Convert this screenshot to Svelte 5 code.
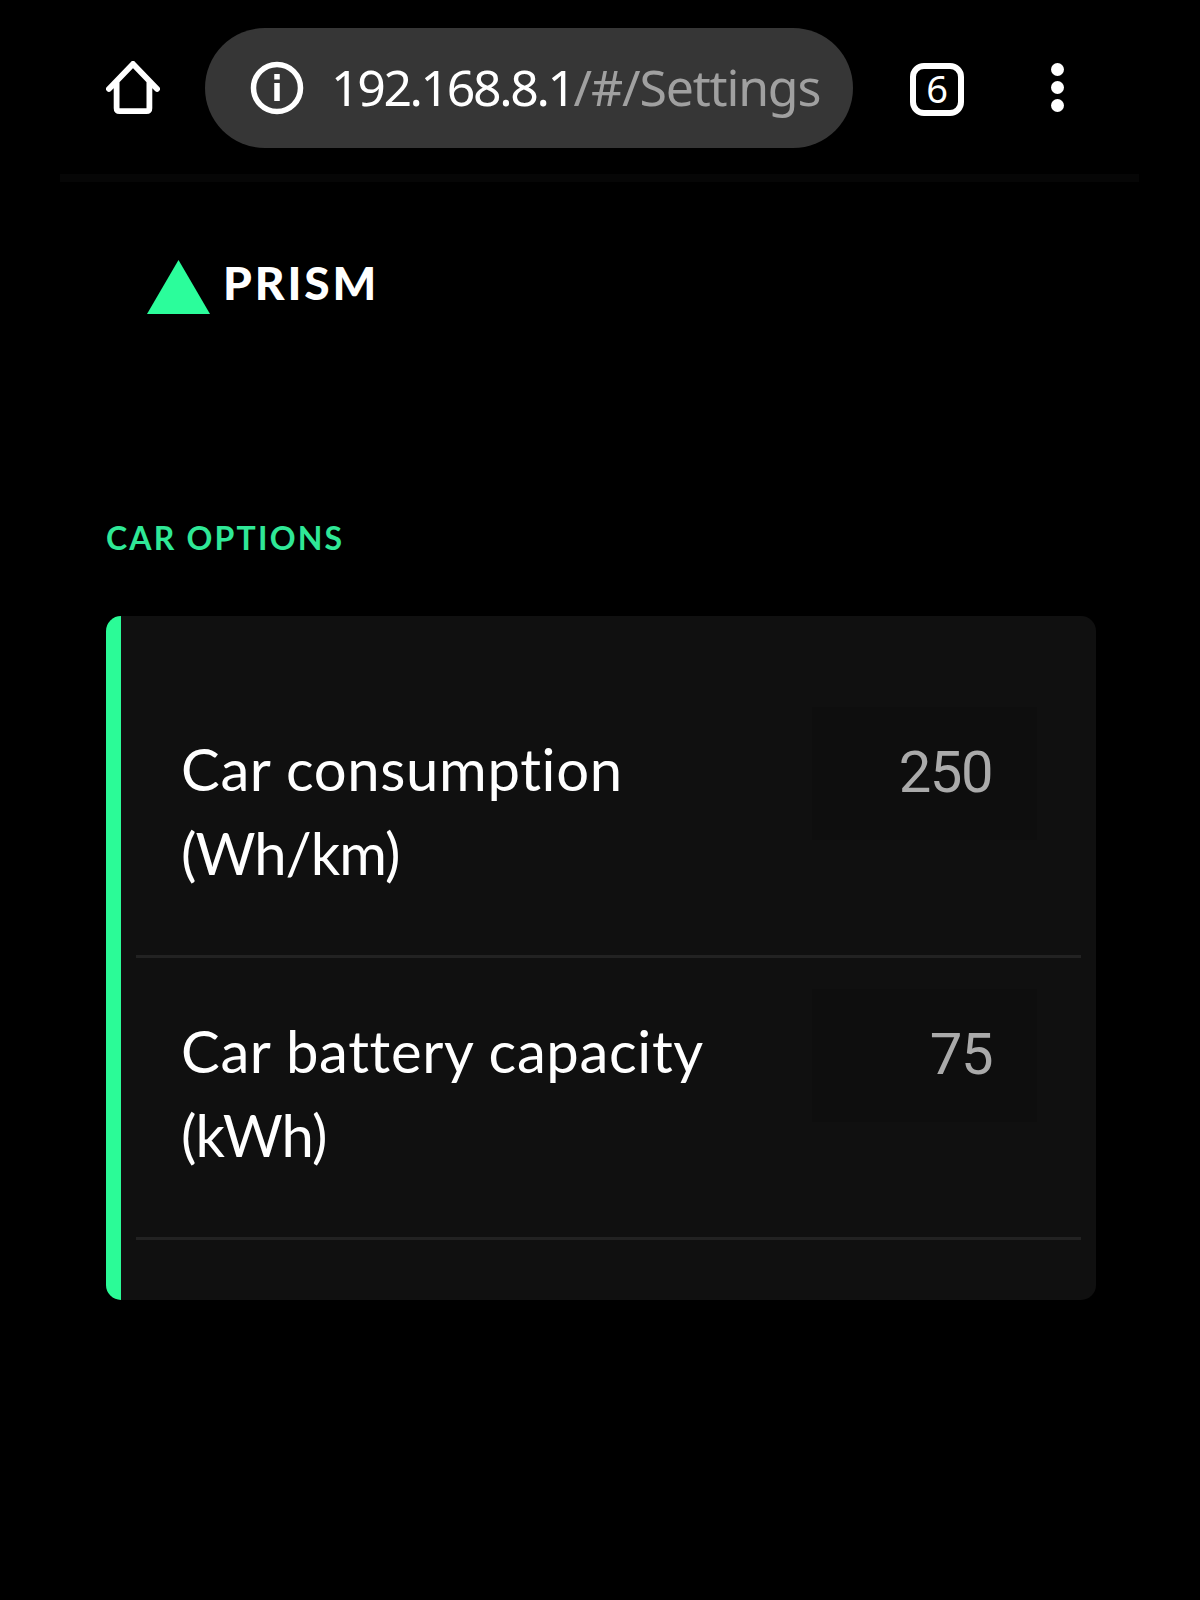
<script>
  const rows = [
    { label: 'Car consumption', unit: '(Wh/km)', value: '250' },
    { label: 'Car battery capacity', unit: '(kWh)', value: '75' }
  ];
</script>

<div class="page">
  <header class="toolbar">
    <svg class="home" viewBox="0 0 56 56" width="54" height="54" aria-hidden="true">
      <path d="M3 29 L28 3 L53 29 M11 22 V49 Q11 52 14 52 H42 Q45 52 45 49 V22" fill="none" stroke="#fff" stroke-width="6" stroke-linecap="round" stroke-linejoin="round" />
    </svg>
    <div class="address">
      <svg class="info" viewBox="0 0 54 54" width="54" height="54" aria-hidden="true">
        <circle cx="27" cy="27" r="23.5" fill="none" stroke="#fff" stroke-width="5.5" />
        <rect x="24.25" y="13" width="5.5" height="5.5" fill="#fff" />
        <rect x="24.25" y="22" width="5.5" height="18" fill="#fff" />
      </svg>
      <span class="url"><span class="host">192.168.8.1</span><span class="path">/#/Settings</span></span>
    </div>
    <div class="tabs">6</div>
    <div class="dots"><i></i><i></i><i></i></div>
  </header>

  <div class="brand">
    <svg viewBox="0 0 63 54" width="63" height="54" aria-hidden="true"><polygon points="31.5,0 63,54 0,54" fill="#2bfd9b" /></svg>
    <span>PRISM</span>
  </div>

  <h2>CAR OPTIONS</h2>

  <section class="card">
    {#each rows as row}
      <div class="row">
        <div class="label">{row.label}<br /><span class="unit">{row.unit}</span></div>
        <div class="input">{row.value}</div>
      </div>
    {/each}
  </section>
</div>

<style>
  :global(body) {
    margin: 0;
    background: #000;
  }
  .page {
    height: 1600px;
    background: #000;
    color: #fff;
    font-family: Lato, "Open Sans", sans-serif;
    overflow: hidden;
  }
  .toolbar {
    box-sizing: border-box;
    height: 182px;
    margin: 0 61px 0 60px;
    padding: 28px 0 0 46px;
    display: flex;
    align-items: flex-start;
    border-bottom: 8px solid #060606;
  }
  .home {
    margin: 33px 0 0 0;
    flex: none;
  }
  .address {
    box-sizing: border-box;
    width: 648px;
    height: 120px;
    margin-left: 45px;
    padding-left: 45px;
    border-radius: 60px;
    background: #363636;
    display: flex;
    align-items: center;
    flex: none;
  }
  .info {
    flex: none;
  }
  .url {
    margin: -3px 0 0 27px;
    font-family: "Noto Sans", sans-serif;
    font-size: 50px;
    white-space: nowrap;
  }
  .host {
    color: #fff;
    letter-spacing: -2.4px;
  }
  .path {
    color: #a0a0a0;
    letter-spacing: -1.2px;
  }
  .tabs {
    box-sizing: border-box;
    width: 54px;
    height: 53px;
    margin: 35px 0 0 57px;
    padding-bottom: 4px;
    border: 6px solid #fff;
    border-radius: 14px;
    display: flex;
    align-items: center;
    justify-content: center;
    font-family: "Noto Sans", sans-serif;
    font-size: 38px;
    line-height: 38px;
    font-weight: 400;
    flex: none;
  }
  .dots {
    margin: 35px 0 0 87px;
    display: flex;
    flex-direction: column;
    gap: 5px;
    flex: none;
  }
  .dots i {
    display: block;
    width: 13px;
    height: 13px;
    border-radius: 50%;
    background: #fff;
  }
  .brand {
    margin: 78px 0 0 147px;
    height: 54px;
    display: flex;
    align-items: flex-start;
    gap: 13px;
  }
  .brand svg {
    flex: none;
  }
  .brand span {
    font-size: 46px;
    line-height: 46px;
    font-weight: 900;
    letter-spacing: 2.9px;
  }
  h2 {
    margin: 208px 0 0 106px;
    font-size: 32px;
    line-height: 32px;
    font-weight: 700;
    letter-spacing: 2.2px;
    color: #2fe897;
  }
  .card {
    box-sizing: border-box;
    width: 990px;
    height: 684px;
    margin: 62px 0 0 106px;
    padding: 60px 15px 60px 0;
    background: #101010;
    border-left: 15px solid #2bfb97;
    border-radius: 15px;
  }
  .row {
    box-sizing: border-box;
    height: 282px;
    margin-left: 15px;
    padding: 31px 44px 0 45px;
    display: flex;
    justify-content: space-between;
    align-items: flex-start;
    border-bottom: 3px solid #222;
  }
  .label {
    margin-top: 20px;
    font-size: 58px;
    line-height: 84px;
    letter-spacing: 0.65px;
  }
  .unit {
    letter-spacing: -1px;
  }
  .input {
    box-sizing: border-box;
    width: 225px;
    height: 133px;
    padding: 0 45px 4px 0;
    background: #0e0e0e;
    display: flex;
    align-items: center;
    justify-content: flex-end;
    font-family: Roboto, sans-serif;
    font-size: 58px;
    letter-spacing: -1.5px;
    color: #aaa;
  }
</style>
